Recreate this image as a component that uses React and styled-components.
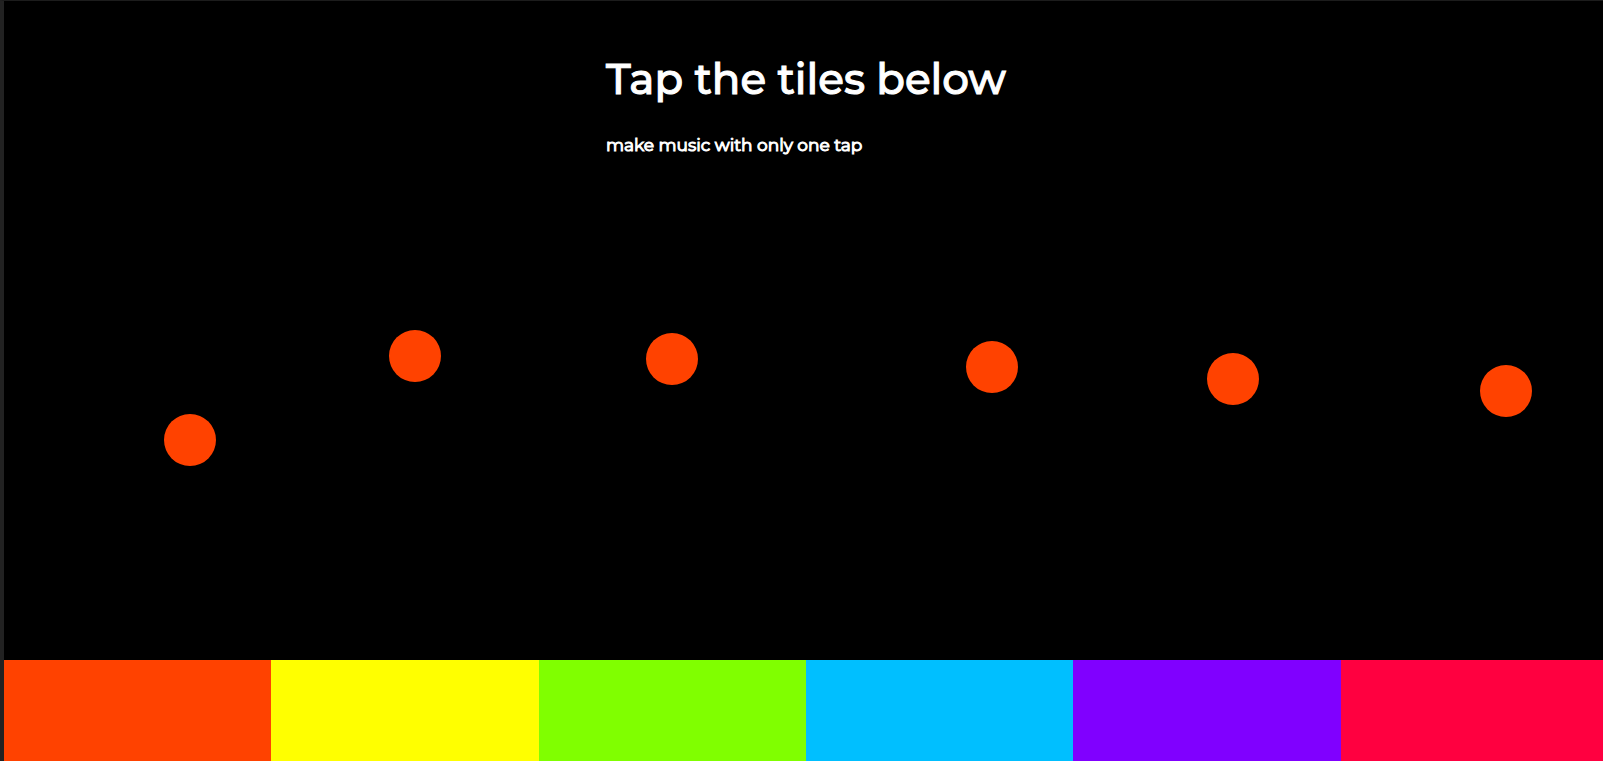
import React from "react";
import styled, { createGlobalStyle } from "styled-components";

const GlobalStyle = createGlobalStyle`
  *, *::before, *::after { box-sizing: border-box; }
  body {
    margin: 0;
    background: #000;
    color: #fff;
    font-family: Montserrat, Inter, sans-serif;
  }
`;

const Frame = styled.div`
  min-height: 100vh;
  display: flex;
  border-top: 1px solid #1c1c1c;
  border-left: 4px solid #222;
  overflow: hidden;
`;

/* The board runs slightly past the right edge of the frame. */
const Board = styled.main`
  flex: none;
  width: calc(100% + 5px);
  display: flex;
  flex-direction: column;
  background: #000;
`;

const Header = styled.header`
  align-self: center;
  display: flex;
  flex-direction: column;
  gap: 28px;
  padding-top: 52px;
`;

const Title = styled.h1`
  margin: 0;
  font-size: 42px;
  line-height: 52px;
  font-weight: 500;
  -webkit-text-stroke: 1px currentColor;
`;

const Subtitle = styled.h2`
  margin: 0;
  font-size: 17px;
  line-height: 24px;
  font-weight: 400;
  -webkit-text-stroke: 1px currentColor;
`;

const Stage = styled.section`
  position: relative;
  flex: 1;
  min-height: 320px;
`;

const Ball = styled.span`
  position: absolute;
  left: ${({ $left }) => $left}%;
  bottom: ${({ $bottom }) => $bottom}px;
  width: 52px;
  height: 52px;
  border-radius: 50%;
  background: #ff4200;
`;

const Tiles = styled.div`
  display: grid;
  grid-template-columns: repeat(6, 1fr);
  height: 101px;
`;

const Tile = styled.button`
  border: 0;
  padding: 0;
  background: ${({ $color }) => $color};
  cursor: pointer;
`;

const balls = [
  { left: 10, bottom: 194 },
  { left: 24, bottom: 278 },
  { left: 40, bottom: 275 },
  { left: 60, bottom: 267 },
  { left: 75, bottom: 255 },
  { left: 92, bottom: 243 },
];

const tiles = [
  { name: "Orange", color: "#ff4200" },
  { name: "Yellow", color: "#ffff00" },
  { name: "Green", color: "#80ff00" },
  { name: "Blue", color: "#00bfff" },
  { name: "Violet", color: "#8000ff" },
  { name: "Red", color: "#ff0040" },
];

export default function App() {
  return (
    <>
      <GlobalStyle />
      <Frame>
        <Board>
          <Header>
            <Title>Tap the tiles below</Title>
            <Subtitle>make music with only one tap</Subtitle>
          </Header>
          <Stage>
            {balls.map(({ left, bottom }) => (
              <Ball key={left} $left={left} $bottom={bottom} />
            ))}
          </Stage>
          <Tiles>
            {tiles.map(({ name, color }) => (
              <Tile key={name} type="button" aria-label={name} $color={color} />
            ))}
          </Tiles>
        </Board>
      </Frame>
    </>
  );
}
